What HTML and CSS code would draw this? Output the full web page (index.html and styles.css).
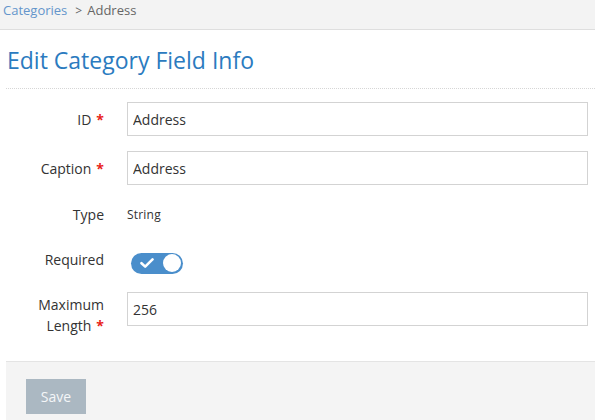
FILE: index.html
```html
<!DOCTYPE html>
<html>
<head>
<meta charset="utf-8">
<link rel="stylesheet" href="styles.css">
</head>
<body>
<div class="crumbs"><a class="crumb-link">Categories</a><span class="sep">&gt;</span><span class="crumb-current">Address</span></div>
<div class="page">
  <h1 class="title">Edit Category Field Info</h1>
  <form class="form">
    <div class="row row-id">
      <label class="label">ID<span class="req">*</span></label>
      <div class="field"><input class="input" type="text" value="Address"></div>
    </div>
    <div class="row row-caption">
      <label class="label">Caption<span class="req">*</span></label>
      <div class="field"><input class="input" type="text" value="Address"></div>
    </div>
    <div class="row row-type">
      <label class="label">Type</label>
      <div class="field"><span class="static">String</span></div>
    </div>
    <div class="row row-required">
      <label class="label">Required</label>
      <div class="field">
        <span class="toggle">
          <svg class="check" width="14" height="12" viewBox="0 0 14 12"><path d="M1.5 6.2 L5.2 9.6 L12.5 2.4" fill="none" stroke="#fff" stroke-width="2.6" stroke-linecap="round" stroke-linejoin="round"/></svg>
          <span class="knob"></span>
        </span>
      </div>
    </div>
    <div class="row row-max">
      <label class="label label-wrap">Maximum<br>Length<span class="req">*</span></label>
      <div class="field"><input class="input" type="text" value="256"></div>
    </div>
  </form>
  <div class="footer"><button class="btn" type="button">Save</button></div>
</div>
</body>
</html>
```
FILE: styles.css
```css
html, body {
  margin: 0;
  padding: 0;
  background: #fff;
  font-family: "Open Sans", "Liberation Sans", sans-serif;
  color: #333;
  overflow: hidden;
}
.crumbs {
  height: 30px;
  box-sizing: border-box;
  background: #f3f3f3;
  border-bottom: 1px solid #dedede;
  padding: 1px 0 0 3px;
  font-size: 13px;
  line-height: 18px;
}
.crumb-link { color: #6495cb; }
.sep { color: #666; margin: 0 5px 0 8px; font-size: 12px; }
.crumb-current { color: #666; }
.page {
  margin-left: 6px;
}
.title {
  margin: 0;
  padding: 14px 0 12px 1px;
  font-size: 23px;
  font-weight: 400;
  line-height: 32px;
  color: #2b7bbf;
  border-bottom: 1px dotted #d6d6d6;
}
.form {
  padding: 13px 7px 0 0;
  margin: 0;
}
.row {
  display: flex;
  align-items: center;
  min-height: 34px;
}
.label {
  width: 98px;
  flex: none;
  text-align: right;
  font-size: 14px;
  line-height: 21px;
  color: #333;
}
.req {
  color: #e8231a;
  font-weight: 700;
  margin-left: 5px;
}
.field {
  flex: 1;
  margin-left: 23px;
  display: flex;
  align-items: center;
}
.input {
  width: 100%;
  height: 34px;
  box-sizing: border-box;
  border: 1px solid #d3d3d3;
  border-radius: 0;
  padding: 0 5px;
  font-family: "Open Sans", "Liberation Sans", sans-serif;
  font-size: 14px;
  color: #333;
  outline: none;
}
.row-id { margin-bottom: 15px; }
.row-caption { margin-bottom: 12px; }
.row-type { margin-bottom: 15px; }
.row-type .label { padding-top: 1px; }
.static { font-size: 12px; color: #333; letter-spacing: 0.2px; padding-top: 0; }
.row-required { margin-bottom: 12px; }
.row-required .label { margin-top: -8px; }
.toggle {
  margin-left: 4px;
  width: 52px;
  height: 21px;
  border-radius: 11px;
  background: #4a8ecb;
  display: flex;
  align-items: center;
  justify-content: space-between;
  padding: 0 2px 0 9px;
  box-sizing: border-box;
}
.check { display: block; }
.knob {
  width: 18px;
  height: 18px;
  border-radius: 50%;
  background: #fff;
}
.row-max { align-items: flex-start; }
.label-wrap { padding-top: 2px; }
.footer {
  margin-top: 25px;
  background: #f4f4f4;
  border-top: 1px solid #e4e4e4;
  padding: 17px 0 10px 20px;
  height: 60px;
}
.btn {
  width: 60px;
  height: 35px;
  border: none;
  background: #abb8c2;
  color: #f4f6f8;
  font-family: "Open Sans", "Liberation Sans", sans-serif;
  font-size: 14px;
  padding: 0;
}
```
